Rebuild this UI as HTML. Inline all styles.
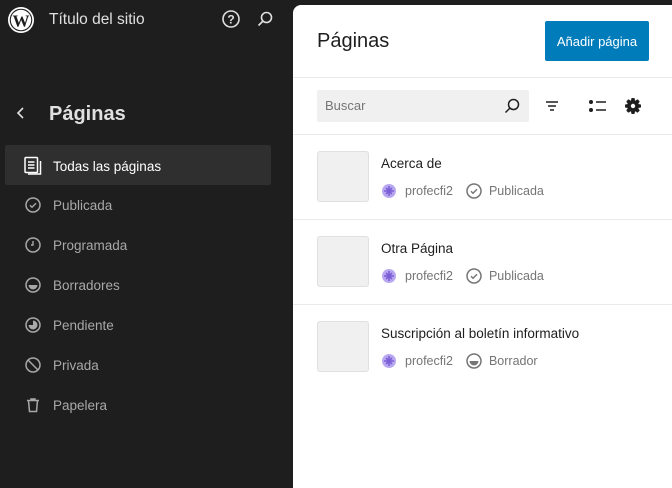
<!DOCTYPE html>
<html><head><meta charset="utf-8"><style>
*{box-sizing:border-box;margin:0;padding:0}
body{width:672px;height:488px;background:#1e1e1e;font-family:"Liberation Sans",sans-serif;position:relative;overflow:hidden}
.a{position:absolute}
.side{color:#e0e0e0}
.nav{position:absolute;left:24px;font-size:13.5px;color:#a8a8a8;display:flex;align-items:center}
.nav svg{margin-right:11px}
.panel{position:absolute;left:293px;top:5px;width:379px;height:483px;background:#fff;border-top-left-radius:8px}
.hr{position:absolute;left:0;right:0;height:1px;background:#eaeaea}
.thumb{position:absolute;left:24px;width:52px;height:51px;background:#f0f0f0;border:1px solid #e0e0e0;border-radius:3px}
.t{position:absolute;left:88px;font-size:13.5px;color:#1e1e1e}
.m{position:absolute;left:88px;font-size:12.5px;color:#757575;display:flex;align-items:center}
</style></head><body>
<svg class="a" style="left:7px;top:6px" width="28" height="28" viewBox="0 0 28 28"><circle cx="14" cy="14" r="13" fill="#fff"/><circle cx="14" cy="14" r="11.3" fill="#1e1e1e"/><circle cx="14" cy="14" r="10.2" fill="#fff"/><text x="14" y="20.5" text-anchor="middle" font-family="Liberation Serif" font-weight="bold" font-size="17" fill="#1e1e1e">W</text></svg>
<div class="a side" style="left:49px;top:11px;font-size:15.5px">Título del sitio</div>
<svg class="a" style="left:221px;top:9px" width="20" height="20" viewBox="0 0 20 20"><circle cx="10" cy="10" r="8" fill="none" stroke="#e0e0e0" stroke-width="1.6"/><text x="10" y="14.5" text-anchor="middle" font-size="12" font-weight="bold" fill="#e0e0e0" font-family="Liberation Sans">?</text></svg>
<svg class="a" style="left:255px;top:9px" width="20" height="20" viewBox="0 0 20 20"><circle cx="11.5" cy="8.5" r="5" fill="none" stroke="#e0e0e0" stroke-width="1.6"/><path d="M8 12L3.5 16.5" stroke="#e0e0e0" stroke-width="1.6"/></svg>
<svg class="a" style="left:14px;top:104px" width="14" height="18" viewBox="0 0 14 18"><path d="M9 4L4 9l5 5" fill="none" stroke="#e0e0e0" stroke-width="1.6"/></svg>
<div class="a side" style="left:49px;top:103px;font-size:20px;font-weight:bold">Páginas</div>
<div class="a" style="left:5px;top:145px;width:266px;height:40px;background:#2f2f2f;border-radius:2px"></div>
<div class="nav" style="top:156px;color:#fff"><svg width="18" height="20" viewBox="0 0 18 20"><rect x="1" y="1.5" width="12.5" height="15" rx="1" fill="none" stroke="#fff" stroke-width="1.5"/><path d="M4 6h6.5M4 9h6.5M4 12h6.5M16.5 5v13H4" fill="none" stroke="#fff" stroke-width="1.5"/></svg>Todas las páginas</div>
<div class="nav" style="top:196px"><svg width="18" height="18" viewBox="0 0 18 18"><circle cx="9" cy="9" r="7" fill="none" stroke="#a8a8a8" stroke-width="1.5"/><path d="M6 9.2l2 2 4-4" fill="none" stroke="#a8a8a8" stroke-width="1.4"/></svg>Publicada</div>
<div class="nav" style="top:236px"><svg width="18" height="18" viewBox="0 0 18 18"><circle cx="9" cy="9" r="7" fill="none" stroke="#a8a8a8" stroke-width="1.5"/><path d="M9 5v4H7" fill="none" stroke="#a8a8a8" stroke-width="1.4"/></svg>Programada</div>
<div class="nav" style="top:276px"><svg width="18" height="18" viewBox="0 0 18 18"><circle cx="9" cy="9" r="7" fill="none" stroke="#a8a8a8" stroke-width="1.5"/><path d="M4.5 9h9a4.5 4.5 0 0 1-9 0z" fill="#a8a8a8"/></svg>Borradores</div>
<div class="nav" style="top:316px"><svg width="18" height="18" viewBox="0 0 18 18"><circle cx="9" cy="9" r="7" fill="none" stroke="#a8a8a8" stroke-width="1.5"/><path d="M9 4.5a4.5 4.5 0 1 1-4.5 4.5H9z" fill="#a8a8a8"/></svg>Pendiente</div>
<div class="nav" style="top:356px"><svg width="18" height="18" viewBox="0 0 18 18"><circle cx="9" cy="9" r="7" fill="none" stroke="#a8a8a8" stroke-width="1.5"/><path d="M4 4l10 10" stroke="#a8a8a8" stroke-width="1.5"/></svg>Privada</div>
<div class="nav" style="top:396px"><svg width="18" height="18" viewBox="0 0 18 18"><path d="M3 4.5h12M7 4.5V3h4v1.5M4.5 4.5l1 11h7l1-11" fill="none" stroke="#a8a8a8" stroke-width="1.5"/></svg>Papelera</div>

<div class="panel">
<div class="a" style="left:24px;top:25px;font-size:20px;color:#1e1e1e">Páginas</div>
<div class="a" style="left:252px;top:16px;width:104px;height:40px;background:#007cba;border-radius:2px;color:#fff;font-size:13px;display:flex;align-items:center;justify-content:center">Añadir página</div>
<div class="hr" style="top:72px"></div>
<div class="a" style="left:24px;top:85px;width:212px;height:32px;background:#f0f0f0;border-radius:2px"></div>
<div class="a" style="left:32px;top:93px;font-size:13px;color:#757575">Buscar</div>
<svg class="a" style="left:209px;top:91px" width="20" height="20" viewBox="0 0 20 20"><circle cx="11.5" cy="8.5" r="5" fill="none" stroke="#1e1e1e" stroke-width="1.5"/><path d="M8 12L3.5 16.5" stroke="#1e1e1e" stroke-width="1.5"/></svg>
<svg class="a" style="left:249px;top:91px" width="20" height="20" viewBox="0 0 20 20"><path d="M4 6h12M6 10h8M8 14h4" stroke="#1e1e1e" stroke-width="1.5"/></svg>
<svg class="a" style="left:294px;top:91px" width="22" height="20" viewBox="0 0 22 20"><circle cx="4" cy="6" r="2" fill="#1e1e1e"/><circle cx="4" cy="14" r="2" fill="#1e1e1e"/><path d="M9 6h10M9 14h10" stroke="#1e1e1e" stroke-width="1.5"/></svg>
<svg class="a" style="left:330px;top:91px" width="20" height="20" viewBox="0 0 20 20"><g transform="translate(10 10)" fill="#1e1e1e"><rect x="-1.8" y="-8" width="3.6" height="16" rx="1"/><rect x="-1.8" y="-8" width="3.6" height="16" rx="1" transform="rotate(45)"/><rect x="-1.8" y="-8" width="3.6" height="16" rx="1" transform="rotate(90)"/><rect x="-1.8" y="-8" width="3.6" height="16" rx="1" transform="rotate(135)"/><circle r="6"/><circle r="2.2" fill="#fff"/></g></svg>
<div class="hr" style="top:129px"></div>

<div class="thumb" style="top:146px"></div>
<div class="t" style="top:151px">Acerca de</div>
<div class="m" style="top:177px"><svg width="16" height="16" viewBox="0 0 16 16"><circle cx="8" cy="8" r="7" fill="#b9a8f0"/><path d="M3 8h10M8 3v10M5 5l6 6M11 5l-6 6" stroke="#7a5fd6" stroke-width="1.6"/></svg><span style="margin-left:8px">profecfi2</span><svg style="margin-left:12px" width="18" height="18" viewBox="0 0 18 18"><circle cx="9" cy="9" r="7" fill="none" stroke="#757575" stroke-width="1.5"/><path d="M6 9.2l2 2 4-4" fill="none" stroke="#757575" stroke-width="1.4"/></svg><span style="margin-left:6px">Publicada</span></div>
<div class="hr" style="top:214px"></div>

<div class="thumb" style="top:231px"></div>
<div class="t" style="top:236px">Otra Página</div>
<div class="m" style="top:262px"><svg width="16" height="16" viewBox="0 0 16 16"><circle cx="8" cy="8" r="7" fill="#b9a8f0"/><path d="M3 8h10M8 3v10M5 5l6 6M11 5l-6 6" stroke="#7a5fd6" stroke-width="1.6"/></svg><span style="margin-left:8px">profecfi2</span><svg style="margin-left:12px" width="18" height="18" viewBox="0 0 18 18"><circle cx="9" cy="9" r="7" fill="none" stroke="#757575" stroke-width="1.5"/><path d="M6 9.2l2 2 4-4" fill="none" stroke="#757575" stroke-width="1.4"/></svg><span style="margin-left:6px">Publicada</span></div>
<div class="hr" style="top:299px"></div>

<div class="thumb" style="top:316px"></div>
<div class="t" style="top:321px">Suscripción al boletín informativo</div>
<div class="m" style="top:347px"><svg width="16" height="16" viewBox="0 0 16 16"><circle cx="8" cy="8" r="7" fill="#b9a8f0"/><path d="M3 8h10M8 3v10M5 5l6 6M11 5l-6 6" stroke="#7a5fd6" stroke-width="1.6"/></svg><span style="margin-left:8px">profecfi2</span><svg style="margin-left:12px" width="18" height="18" viewBox="0 0 18 18"><circle cx="9" cy="9" r="7" fill="none" stroke="#757575" stroke-width="1.5"/><path d="M4.5 9h9a4.5 4.5 0 0 1-9 0z" fill="#757575"/></svg><span style="margin-left:6px">Borrador</span></div>
</div>
</body></html>
